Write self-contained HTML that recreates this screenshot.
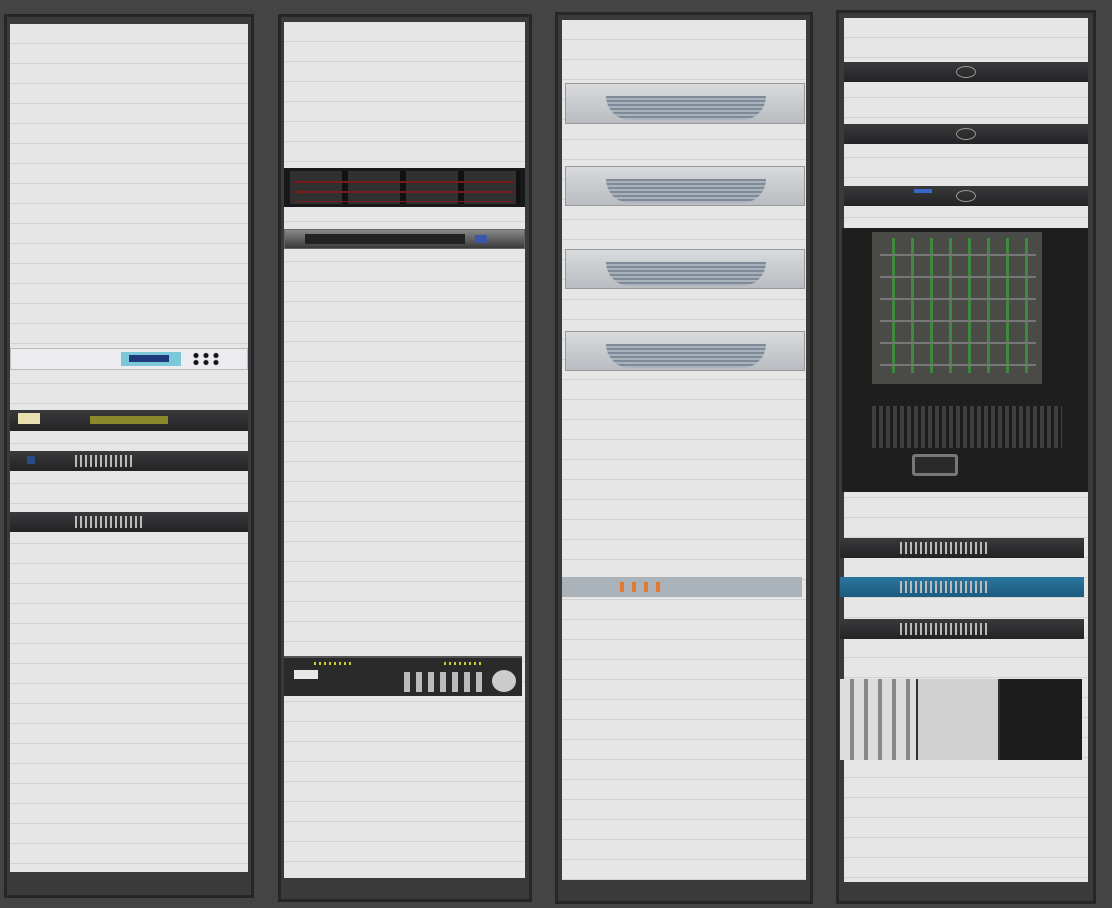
<!DOCTYPE html>
<html><head><meta charset="utf-8"><style>
html,body{margin:0;padding:0}
body{width:1112px;height:908px;background:#444;position:relative;overflow:hidden;font-family:"Liberation Sans",sans-serif}
div{position:absolute;box-sizing:border-box}
.frame{background:#3a3a3a;border:3px solid #262626}
.panel{background:#e6e6e6;background-image:repeating-linear-gradient(180deg,transparent 0,transparent 19px,#d2d2d2 19px,#d2d2d2 20px)}
.dark{background:linear-gradient(#3a3a3c,#232325)}
.silver{background:linear-gradient(#d8dadc,#b9bdc1);border:1px solid #999}
.grille{background:repeating-linear-gradient(180deg,#7e8a98 0,#7e8a98 2px,#aab2bb 2px,#aab2bb 4px);border-radius:0 0 40px 40px}
.leds{background:repeating-linear-gradient(90deg,#bbb 0,#bbb 2px,transparent 2px,transparent 5px)}
</style></head><body>
<div class="frame" style="left:4px;top:14px;width:250px;height:884px"></div>
<div class="frame" style="left:278px;top:14px;width:254px;height:888px"></div>
<div class="frame" style="left:555px;top:12px;width:258px;height:892px"></div>
<div class="frame" style="left:836px;top:10px;width:260px;height:894px"></div>
<div class="panel" style="left:10px;top:24px;width:238px;height:848px"></div>
<div class="panel" style="left:284px;top:22px;width:241px;height:856px"></div>
<div class="panel" style="left:562px;top:20px;width:244px;height:860px"></div>
<div class="panel" style="left:844px;top:18px;width:244px;height:864px"></div>

<div style="left:10px;top:348px;width:238px;height:22px;background:#ececf0;border:1px solid #bbb">
  <div style="left:110px;top:3px;width:60px;height:14px;background:#7cc8d8"></div>
  <div style="left:118px;top:6px;width:40px;height:7px;background:#1e3a7a"></div>
  <div style="left:180px;top:3px;width:30px;height:14px;background:radial-gradient(circle,#111 2px,transparent 3px) 0 0/10px 7px"></div>
</div>
<div class="dark" style="left:10px;top:410px;width:238px;height:21px">
  <div style="left:8px;top:3px;width:22px;height:11px;background:#e8dfb0"></div>
  <div style="left:80px;top:6px;width:78px;height:8px;background:#8a8a2c"></div>
</div>
<div class="dark" style="left:10px;top:451px;width:238px;height:20px">
  <div class="leds" style="left:65px;top:4px;width:60px;height:12px"></div>
  <div style="left:17px;top:5px;width:8px;height:8px;background:#2a4c8a"></div>
</div>
<div class="dark" style="left:10px;top:512px;width:238px;height:20px">
  <div class="leds" style="left:65px;top:4px;width:70px;height:12px"></div>
</div>

<div style="left:284px;top:168px;width:241px;height:39px;background:#18181a">
  <div style="left:6px;top:3px;width:230px;height:33px;background:repeating-linear-gradient(90deg,#333 0,#333 52px,#111 52px,#111 58px),#222;opacity:.9"></div>
  <div style="left:10px;top:5px;width:220px;height:29px;background:repeating-linear-gradient(180deg,transparent 0,transparent 8px,#7a1a1a 8px,#7a1a1a 10px)"></div>
</div>
<div style="left:284px;top:229px;width:241px;height:20px;background:linear-gradient(#8a8a8a,#3a3a3a);border:1px solid #666">
  <div style="left:20px;top:4px;width:160px;height:10px;background:#222"></div>
  <div style="left:190px;top:5px;width:12px;height:8px;background:#3a58a8"></div>
</div>
<div style="left:284px;top:656px;width:238px;height:40px;background:#2a2a2a;border-top:2px solid #555">
  <div style="left:10px;top:12px;width:24px;height:9px;background:#e8e8e8"></div>
  <div style="left:30px;top:4px;width:40px;height:3px;background:repeating-linear-gradient(90deg,#cc3 0,#cc3 2px,transparent 2px,transparent 5px)"></div>
  <div style="left:160px;top:4px;width:40px;height:3px;background:repeating-linear-gradient(90deg,#cc3 0,#cc3 2px,transparent 2px,transparent 5px)"></div>
  <div style="left:120px;top:14px;width:80px;height:20px;background:repeating-linear-gradient(90deg,#bbb 0,#bbb 6px,transparent 6px,transparent 12px)"></div>
  <div style="left:208px;top:12px;width:24px;height:22px;border-radius:50%;background:#ccc"></div>
</div>

<div class="silver" style="left:565px;top:83px;width:240px;height:41px"><div class="grille" style="left:40px;top:12px;width:160px;height:24px"></div></div>
<div class="silver" style="left:565px;top:166px;width:240px;height:40px"><div class="grille" style="left:40px;top:12px;width:160px;height:24px"></div></div>
<div class="silver" style="left:565px;top:249px;width:240px;height:40px"><div class="grille" style="left:40px;top:12px;width:160px;height:24px"></div></div>
<div class="silver" style="left:565px;top:331px;width:240px;height:40px"><div class="grille" style="left:40px;top:12px;width:160px;height:24px"></div></div>
<div style="left:562px;top:577px;width:240px;height:20px;background:#aab2ba">
  <div style="left:58px;top:5px;width:40px;height:10px;background:repeating-linear-gradient(90deg,#e07a30 0,#e07a30 4px,transparent 4px,transparent 12px)"></div>
</div>

<div class="dark" style="left:844px;top:62px;width:244px;height:20px"><div style="left:112px;top:4px;width:20px;height:12px;border:1px solid #999;border-radius:50%"></div></div>
<div class="dark" style="left:844px;top:124px;width:244px;height:20px"><div style="left:112px;top:4px;width:20px;height:12px;border:1px solid #999;border-radius:50%"></div></div>
<div class="dark" style="left:844px;top:186px;width:244px;height:20px"><div style="left:70px;top:3px;width:18px;height:4px;background:#3a68c8"></div><div style="left:112px;top:4px;width:20px;height:12px;border:1px solid #999;border-radius:50%"></div></div>
<div style="left:842px;top:228px;width:246px;height:264px;background:#1e1e1f">
  <div style="left:30px;top:4px;width:170px;height:152px;background:#4a4a47"></div>
  <div style="left:40px;top:10px;width:150px;height:135px;background:repeating-linear-gradient(90deg,transparent 0,transparent 10px,#3a9a3a 10px,#3a9a3a 13px,transparent 13px,transparent 19px);opacity:.8"></div>
  <div style="left:38px;top:6px;width:156px;height:140px;background:repeating-linear-gradient(180deg,transparent 0,transparent 20px,#777 20px,#777 22px)"></div>
  <div style="left:30px;top:178px;width:190px;height:42px;background:repeating-linear-gradient(90deg,#555 0,#555 4px,#1a1a1a 4px,#1a1a1a 7px);opacity:.6"></div>
  <div style="left:70px;top:226px;width:46px;height:22px;border:3px solid #777;border-radius:3px;background:#2a2a2a"></div>
</div>
<div class="dark" style="left:840px;top:538px;width:244px;height:20px"><div class="leds" style="left:60px;top:4px;width:90px;height:12px"></div></div>
<div style="left:840px;top:577px;width:244px;height:20px;background:linear-gradient(#2a76a0,#1d5a7e)"><div class="leds" style="left:60px;top:4px;width:90px;height:12px"></div></div>
<div class="dark" style="left:840px;top:619px;width:244px;height:20px"><div class="leds" style="left:60px;top:4px;width:90px;height:12px"></div></div>
<div style="left:840px;top:679px;width:242px;height:81px;background:#303030">
  <div style="left:0;top:0;width:76px;height:81px;background:repeating-linear-gradient(90deg,#ddd 0,#ddd 10px,#888 10px,#888 14px)"></div>
  <div style="left:78px;top:0;width:80px;height:81px;background:#d0d0d0"></div>
  <div style="left:160px;top:0;width:82px;height:81px;background:#1c1c1c"></div>
</div>
</body></html>
